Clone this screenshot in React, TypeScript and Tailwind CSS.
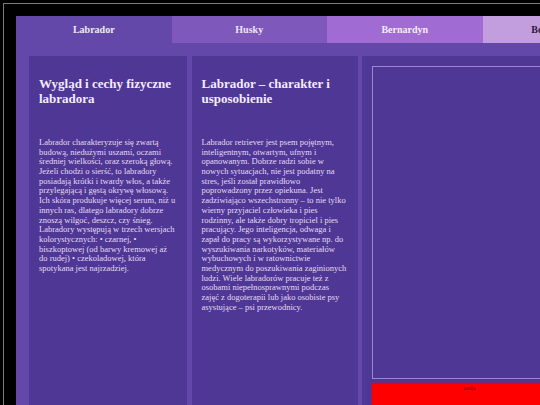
import React from 'react';

const tabs = [
  { label: 'Labrador', className: 'bg-[#6348a9] text-[#eee8f7]' },
  { label: 'Husky', className: 'bg-[#7e58ba] text-[#ece4f6]' },
  { label: 'Bernardyn', className: 'bg-[#a06bd3] text-[#f3ecfa]' },
  { label: 'Border Collie', className: 'bg-[#c39edf] text-[#2a1838]' },
];

const App: React.FC = () => {
  return (
    <div
      className="h-[405px] w-[540px] overflow-hidden bg-black pl-[3px] pt-[3px]"
      style={{ fontFamily: '"Liberation Serif", "Times New Roman", serif' }}
    >
      <div className="h-[420px] border-l border-t border-[#7a7a7a] pl-3 pt-3">
        <div className="h-[480px] w-[574px] bg-[#6348a9]">
          <nav className="flex h-[27px]">
            {tabs.map((tab) => (
              <div
                key={tab.label}
                className={`flex w-[155.5px] shrink-0 items-center justify-center text-[10px] font-bold ${tab.className}`}
              >
                {tab.label}
              </div>
            ))}
          </nav>

          <div className="grid grid-cols-[158px_166px_215px] gap-x-[4.5px] px-[13px] pt-[13px]">
            <section className="h-[420px] bg-[#4f3795] p-[10px] text-[#e4dbf3]">
              <h2 className="mt-[10px] text-[13px] font-bold leading-[15px] text-[#f2ecfb]">
                Wygląd i cechy fizyczne labradora
              </h2>
              <p className="mt-[32px] text-[8.5px] leading-[9.69px]">
                Labrador charakteryzuje się zwartą budową, niedużymi uszami, oczami średniej wielkości,
                oraz szeroką głową. Jeżeli chodzi o sierść, to labradory posiadają krótki i twardy włos,
                a także przylegającą i gęstą okrywę włosową. Ich skóra produkuje więcej serum, niż u
                innych ras, dlatego labradory dobrze znoszą wilgoć, deszcz, czy śnieg. Labradory
                występują w trzech wersjach kolorystycznych: • czarnej, • biszkoptowej (od barwy
                kremowej aż do rudej) • czekoladowej, która spotykana jest najrzadziej.
              </p>
            </section>

            <section className="h-[420px] bg-[#4f3795] p-[10px] text-[#e4dbf3]">
              <h2 className="mt-[10px] text-[13px] font-bold leading-[15px] text-[#f2ecfb]">
                Labrador – charakter i usposobienie
              </h2>
              <p className="mt-[32px] text-[8.5px] leading-[9.69px]">
                Labrador retriever jest psem pojętnym, inteligentnym, otwartym, ufnym i opanowanym.
                Dobrze radzi sobie w nowych sytuacjach, nie jest podatny na stres, jeśli został
                prawidłowo poprowadzony przez opiekuna. Jest zadziwiająco wszechstronny – to nie tylko
                wierny przyjaciel człowieka i pies rodzinny, ale także dobry tropiciel i pies pracujący.
                Jego inteligencja, odwaga i zapał do pracy są wykorzystywane np. do wyszukiwania
                narkotyków, materiałów wybuchowych i w ratownictwie medycznym do poszukiwania
                zaginionych ludzi. Wiele labradorów pracuje też z osobami niepełnosprawnymi podczas
                zajęć z dogoterapii lub jako osobiste psy asystujące – psi przewodnicy.
              </p>
            </section>

            <section className="h-[420px] bg-[#4f3795] p-[10px]">
              <div className="h-[313px] border border-[#9d87cf]" />
              <div className="mt-[4.5px] h-[100px] bg-[#ff0000] text-center text-[7px] leading-[9px] text-[#6e0000] shadow-[0_-1px_3px_rgba(255,0,0,0.6)]">
                asda
              </div>
            </section>
          </div>
        </div>
      </div>
    </div>
  );
};

export default App;
